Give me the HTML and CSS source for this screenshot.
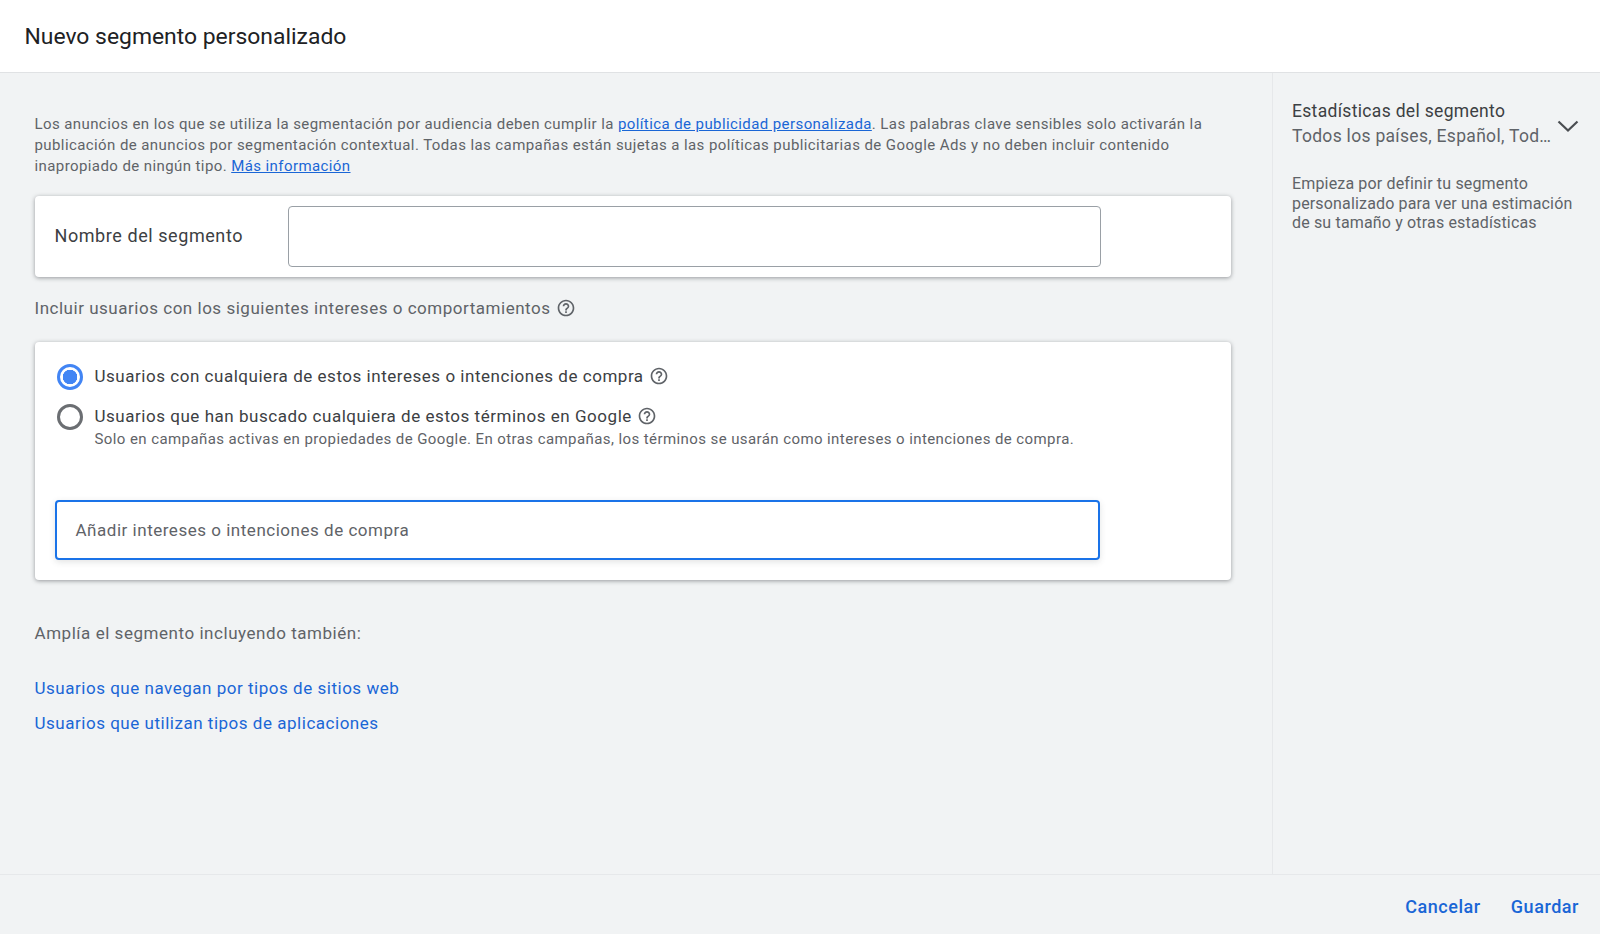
FILE: index.html
```html
<!DOCTYPE html>
<html lang="es">
<head>
    <meta charset="UTF-8">
    <meta name="viewport" content="width=device-width, initial-scale=1.0">
    <title>Nuevo segmento personalizado</title>
    <link rel="stylesheet" href="styles.css">
</head>
<body>
    <svg class="icon-defs" width="0" height="0" aria-hidden="true">
        <symbol id="help" viewBox="0 0 24 24">
            <path d="M11 18h2v-2h-2v2zm1-16C6.48 2 2 6.48 2 12s4.48 10 10 10 10-4.48 10-10S17.52 2 12 2zm0 18c-4.41 0-8-3.59-8-8s3.59-8 8-8 8 3.59 8 8-3.59 8-8 8zm0-14c-2.21 0-4 1.79-4 4h2c0-1.1.9-2 2-2s2 .9 2 2c0 2-3 1.75-3 5h2c0-2.25 3-2.5 3-5 0-2.21-1.79-4-4-4z"/>
        </symbol>
    </svg>

    <header class="top-bar">
        <h1 class="page-title">Nuevo segmento personalizado</h1>
    </header>

    <div class="content">
        <main class="main-col">
            <p class="notice">Los anuncios en los que se utiliza la segmentación por audiencia deben cumplir la <a href="#">política de publicidad personalizada</a>. Las palabras clave sensibles solo activarán la publicación de anuncios por segmentación contextual. Todas las campañas están sujetas a las políticas publicitarias de Google Ads y no deben incluir contenido inapropiado de ningún tipo. <a href="#">Más información</a></p>

            <section class="card name-card">
                <label class="name-label" for="segmentName">Nombre del segmento</label>
                <input class="name-input" type="text" id="segmentName">
            </section>

            <div class="section-label">
                <span>Incluir usuarios con los siguientes intereses o comportamientos</span>
                <svg class="help help-lg"><use href="#help"/></svg>
            </div>

            <section class="card options-card">
                <div class="option option-first">
                    <span class="radio radio-on"></span>
                    <div class="option-text">
                        <div class="option-title">
                            <span>Usuarios con cualquiera de estos intereses o intenciones de compra</span>
                            <svg class="help"><use href="#help"/></svg>
                        </div>
                    </div>
                </div>
                <div class="option">
                    <span class="radio"></span>
                    <div class="option-text">
                        <div class="option-title">
                            <span>Usuarios que han buscado cualquiera de estos términos en Google</span>
                            <svg class="help"><use href="#help"/></svg>
                        </div>
                        <div class="option-sub">Solo en campañas activas en propiedades de Google. En otras campañas, los términos se usarán como intereses o intenciones de compra.</div>
                    </div>
                </div>
                <div class="terms-box">Añadir intereses o intenciones de compra</div>
            </section>

            <p class="expand-label">Amplía el segmento incluyendo también:</p>
            <a class="expand-link" href="#">Usuarios que navegan por tipos de sitios web</a>
            <a class="expand-link" href="#">Usuarios que utilizan tipos de aplicaciones</a>
        </main>

        <aside class="side-col">
            <div class="stats-head">
                <div class="stats-titles">
                    <div class="stats-title">Estadísticas del segmento</div>
                    <div class="stats-sub">Todos los países, Español, Tod…</div>
                </div>
                <svg class="chevron" viewBox="0 0 24 14"><path d="M2.5 2.5 12 11.5l9.5-9"/></svg>
            </div>
            <p class="stats-text">Empieza por definir tu segmento personalizado para ver una estimación de su tamaño y otras estadísticas</p>
        </aside>
    </div>

    <footer class="bottom-bar">
        <a class="action" href="#">Cancelar</a>
        <a class="action" href="#">Guardar</a>
    </footer>
</body>
</html>
```

FILE: styles.css
```css
* {
    box-sizing: border-box;
}
html, body {
    height: 100%;
}
body {
    margin: 0;
    height: 934px;
    display: flex;
    flex-direction: column;
    overflow: hidden;
    background-color: #f1f3f4;
    color: #5f6368;
    font-family: Roboto, "Liberation Sans", sans-serif;
}
a {
    color: #1a66d6;
}
.icon-defs {
    position: absolute;
}

/* header */
.top-bar {
    height: 73px;
    flex: none;
    display: flex;
    align-items: center;
    padding: 0 24.5px;
    background-color: #fff;
    border-bottom: 1px solid #e0e2e4;
}
.page-title {
    margin: 0;
    font-size: 22.9px;
    font-weight: 400;
    color: #202124;
}

/* two columns */
.content {
    flex: 1;
    display: flex;
    min-height: 0;
}
.main-col {
    width: 1272px;
    flex: none;
    padding: 41px 40px 0 34.5px;
}
.side-col {
    flex: 1;
    padding: 26px 20px 0 19px;
    border-left: 1px solid #e6e8ea;
}

.notice {
    margin: 0 0 19px;
    font-size: 15px;
    line-height: 21px;
    letter-spacing: 0.41px;
}
.notice a {
    text-decoration: underline;
}

.card {
    width: 1196px;
    background-color: #fff;
    border-radius: 4px;
    box-shadow: 0 1px 4px rgba(60, 64, 67, 0.5);
}
.name-card {
    height: 81px;
    display: flex;
    align-items: center;
    padding: 0 20px;
}
.name-label {
    width: 233px;
    margin-bottom: 2px;
    font-size: 18px;
    letter-spacing: 0.57px;
    color: #3c4043;
}
.name-input {
    width: 813px;
    height: 61px;
    border: 1px solid #9aa0a6;
    border-radius: 4px;
    background-color: #fff;
}

.section-label {
    display: flex;
    align-items: center;
    gap: 5px;
    height: 24px;
    margin: 19px 0 22px;
    font-size: 17px;
    letter-spacing: 0.52px;
}
.help {
    width: 20px;
    height: 20px;
    flex: none;
    fill: #5f6368;
}

.options-card {
    height: 238px;
    padding: 22px 20px 0 22px;
    margin-bottom: 41px;
}
.option {
    display: flex;
    gap: 12px;
}
.option-first {
    height: 40px;
}
.radio {
    width: 26px;
    height: 26px;
    flex: none;
    border: 3px solid #6b6e72;
    border-radius: 50%;
    background-color: #fff;
}
.radio-on {
    border-color: #4285f4;
    background: radial-gradient(circle, #4285f4 0 7px, #fff 7.5px);
}
.option-text {
    min-width: 0;
}
.option-title {
    display: flex;
    align-items: center;
    gap: 5px;
    height: 24px;
    font-size: 17px;
    letter-spacing: 0.53px;
    color: #3c4043;
}
.option-sub {
    margin-top: 1px;
    margin-bottom: 1px;
    font-size: 15px;
    line-height: 20px;
    letter-spacing: 0.414px;
}
.terms-box {
    width: 1045px;
    height: 60px;
    margin: 50px 0 0 -2px;
    padding-left: 19px;
    display: flex;
    align-items: center;
    border: 2px solid #1a73e8;
    border-radius: 4px;
    font-size: 17px;
    letter-spacing: 0.52px;
    box-shadow: 0 2px 6px rgba(60, 64, 67, 0.15);
}

.expand-label {
    margin: 0 0 31px;
    font-size: 17px;
    line-height: 24px;
    letter-spacing: 0.54px;
}
.expand-link {
    display: block;
    height: 24px;
    margin-bottom: 11px;
    font-size: 17px;
    line-height: 24px;
    letter-spacing: 0.52px;
    text-decoration: none;
}

/* side panel */
.stats-head {
    display: flex;
    align-items: center;
    justify-content: space-between;
}
.stats-title {
    font-size: 17.5px;
    line-height: 25px;
    letter-spacing: 0.32px;
    color: #3c4043;
}
.stats-sub {
    font-size: 17.5px;
    line-height: 25px;
    letter-spacing: 0.3px;
    white-space: nowrap;
}
.chevron {
    width: 24px;
    height: 14px;
    margin-top: 3px;
    fill: none;
    stroke: #4a4d51;
    stroke-width: 2.2;
}
.stats-text {
    margin: 25px 0 0;
    font-size: 16px;
    line-height: 19.5px;
    letter-spacing: 0.16px;
}

/* footer */
.bottom-bar {
    height: 60px;
    flex: none;
    display: flex;
    justify-content: flex-end;
    align-items: center;
    gap: 30px;
    padding: 4px 21px 0 0;
    border-top: 1px solid #e6e8ea;
}
.action {
    font-size: 18px;
    font-weight: 500;
    letter-spacing: 0.55px;
    text-decoration: none;
}
```
